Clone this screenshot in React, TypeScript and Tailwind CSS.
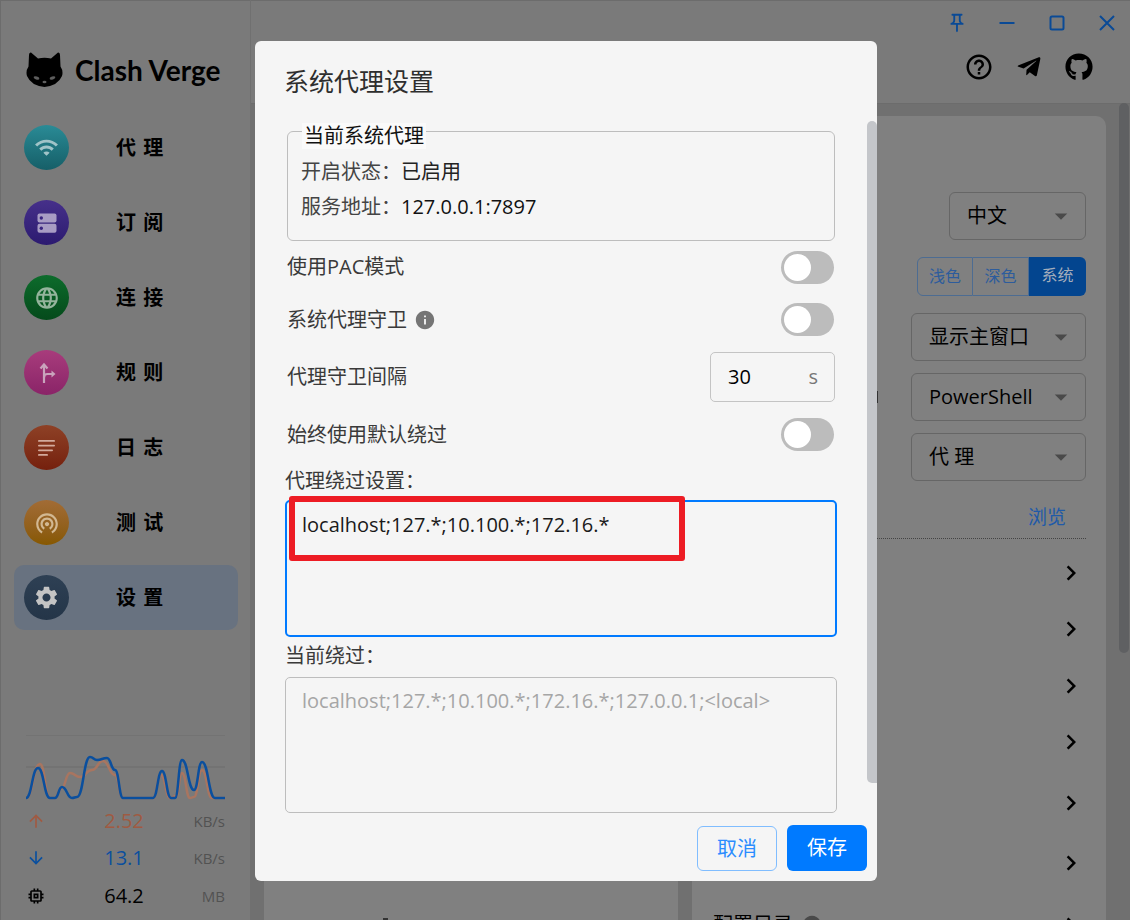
import type { ReactNode } from "react";
import {
  MdArrowDownward,
  MdArrowDropDown,
  MdArrowUpward,
  MdChevronRight,
  MdHelpOutline,
  MdInfo,
  MdLanguage,
  MdMemory,
  MdSettings,
  MdWifi,
  MdWifiTethering,
} from "react-icons/md";
import { FaGithub, FaTelegramPlane } from "react-icons/fa";

type Point = [number, number];

const uploadLine: Point[] = [
  [26, 798], [40, 764], [50, 798], [55, 798], [61, 789], [70, 773], [80, 777], [92, 770],
  [103, 761], [115, 775], [123, 798], [153, 798], [161, 775], [170, 798], [176, 796],
  [182, 773], [190, 798], [194, 797], [202, 770], [212, 798], [225, 798],
];

const downloadLine: Point[] = [
  [26, 798], [38, 768], [50, 798], [55, 798], [62, 787], [72, 798], [77, 797], [90, 757],
  [97, 760], [107, 758], [115, 770], [123, 798], [153, 798], [162, 771], [171, 798],
  [175, 798], [182, 760], [194, 790], [202, 762], [215, 798], [225, 798],
];

const toPath = (points: Point[]) =>
  points.reduce((d, [x, y], i) => {
    if (i === 0) return `M${x} ${y}`;
    const [px, py] = points[i - 1];
    const mid = (px + x) / 2;
    return `${d} C${mid} ${py} ${mid} ${y} ${x} ${y}`;
  }, "");

const CatLogo = () => (
  <svg width="37" height="35" viewBox="0 0 37 35" className="shrink-0">
    <path
      d="M5 .5 L12 6.5 Q18.5 5 25 6.5 L32 .5 Q34 .2 34 3 L34.5 14.5 Q37.5 19 36 24 Q32 33.5 18.5 35 Q5 33.5 1 24 Q-.5 19 2.5 14.5 L3 3 Q3 .2 5 .5 Z"
      fill="#000"
    />
    <ellipse cx="10.5" cy="26" rx="3" ry="1.5" transform="rotate(20 10.5 26)" fill="#5e5e5e" />
    <ellipse cx="26.5" cy="26" rx="3" ry="1.5" transform="rotate(-20 26.5 26)" fill="#5e5e5e" />
    <ellipse cx="18.5" cy="30" rx="2" ry="1.2" fill="#5e5e5e" />
  </svg>
);

const ServerIcon = () => (
  <svg width="20" height="20" viewBox="0 0 20 20">
    <rect x="0.5" y="0.5" width="19" height="9" rx="2" fill="#a89cc4" />
    <rect x="0.5" y="10.8" width="19" height="9" rx="2" fill="#a89cc4" />
    <circle cx="4.3" cy="5" r="1.7" fill="#3a2480" />
    <circle cx="4.3" cy="15.3" r="1.7" fill="#3a2480" />
  </svg>
);

const RuleIcon = () => (
  <svg width="22" height="22" viewBox="0 0 22 22" fill="none" stroke="#c9a4bc" strokeWidth="2.2">
    <path d="M8 21V3" />
    <path d="M4.5 6.5 8 2.5l3.5 4" />
    <path d="M8 15.5c0-3 1.5-3.5 3.5-3.5H16" />
    <path d="M15.5 8.5 19.5 12l-4 3.5z" fill="#c9a4bc" stroke="none" />
  </svg>
);

const LogIcon = () => (
  <svg width="18" height="16" viewBox="0 0 18 16" fill="#d3aa9c">
    <rect x="0" y="0" width="17" height="1.8" rx="0.9" />
    <rect x="0" y="4.7" width="17" height="1.8" rx="0.9" />
    <rect x="0" y="9.4" width="15" height="1.8" rx="0.9" />
    <rect x="0" y="14" width="10" height="1.8" rx="0.9" />
  </svg>
);

const navItems: { label: string; circle: string; icon: ReactNode; active?: boolean }[] = [
  { label: "代 理", circle: "from-[#2a8b96] to-[#165f68]", icon: <MdWifi size={25} color="#a0c4c8" /> },
  { label: "订 阅", circle: "from-[#46308a] to-[#2c1a70]", icon: <ServerIcon /> },
  { label: "连 接", circle: "from-[#0d6c2c] to-[#054a1b]", icon: <MdLanguage size={26} color="#94b49c" /> },
  { label: "规 则", circle: "from-[#a83c7c] to-[#8a2468]", icon: <RuleIcon /> },
  { label: "日 志", circle: "from-[#8e4126] to-[#75200d]", icon: <LogIcon /> },
  { label: "测 试", circle: "from-[#a26c35] to-[#875800]", icon: <MdWifiTethering size={26} color="#d2b892" /> },
  { label: "设 置", circle: "from-[#2e4054] to-[#243548]", icon: <MdSettings size={27} color="#c4c4c4" />, active: true },
];

const Toggle = () => (
  <div className="w-[53px] h-[33px] mr-px rounded-full bg-[#bcbcbc] flex items-center pl-[3px]">
    <div className="w-[27px] h-[27px] rounded-full bg-white" />
  </div>
);

const Select = ({ width, children }: { width: string; children: ReactNode }) => (
  <div className={`${width} h-[48px] border border-[#666] rounded-[6px] flex items-center justify-between pl-[17px] pr-[9px] text-[20px] text-black`}>
    <span>{children}</span>
    <MdArrowDropDown size={30} color="#4a4a4a" />
  </div>
);

const StatRow = ({ icon, value, unit, color }: { icon: ReactNode; value: string; unit: string; color: string }) => (
  <div className="h-[37.5px] flex items-center w-[199px]">
    <div className="w-[20px] flex justify-center">{icon}</div>
    <div className={`w-[60px] ml-[48px] text-center text-[20px] ${color}`}>{value}</div>
    <div className="flex-1 text-right text-[15px] text-[#525252]">{unit}</div>
  </div>
);

const Sidebar = () => (
  <aside className="w-[251px] shrink-0 border-r border-[#707070] flex flex-col">
    <div className="h-[115px] pl-[26px] pt-[52px] flex items-start gap-[12px]">
      <CatLogo />
      <span className="font-['Lato'] font-bold text-[28px] leading-[36px] text-black">Clash Verge</span>
    </div>
    <nav className="flex flex-col gap-[10px] ml-[14px] mr-[12px]">
      {navItems.map((item) => (
        <div
          key={item.label}
          className={`h-[65px] rounded-[10px] pl-[10px] flex items-center gap-[47px] ${item.active ? "bg-[#687280]" : ""}`}
        >
          <div className={`w-[45px] h-[45px] rounded-full bg-linear-to-b ${item.circle} flex items-center justify-center`}>
            {item.icon}
          </div>
          <span className="text-[20px] font-bold text-black [word-spacing:2px]">{item.label}</span>
        </div>
      ))}
    </nav>
    <div className="mt-[105px] pl-[26px]">
      <svg width="199" height="67" viewBox="26 735 199 67" fill="none" className="block">
        <line x1="26" y1="735" x2="225" y2="735" stroke="#6c6c6c" />
        <line x1="26" y1="767" x2="225" y2="767" stroke="#6c6c6c" />
        <path d={toPath(uploadLine)} stroke="#a87560" strokeWidth="2.5" />
        <path d={toPath(downloadLine)} stroke="#0a4f9e" strokeWidth="2.5" />
      </svg>
      <StatRow icon={<MdArrowUpward size={20} color="#a05a42" />} value="2.52" unit="KB/s" color="text-[#a05a42]" />
      <StatRow icon={<MdArrowDownward size={20} color="#0a4f9e" />} value="13.1" unit="KB/s" color="text-[#0a4f9e]" />
      <StatRow icon={<MdMemory size={20} color="#000" />} value="64.2" unit="MB" color="text-black" />
    </div>
  </aside>
);

const WindowControls = () => (
  <div className="flex justify-end gap-[30px] pr-[13px] text-[#0a4a96]">
    <svg width="22" height="22" viewBox="0 0 24 24" fill="currentColor" className="-mx-px -my-px">
      <path d="M14 4v5c0 1.12.37 2.16 1 3H9c.65-.86 1-1.9 1-3V4h4m3-2H7c-.55 0-1 .45-1 1s.45 1 1 1h1v5c0 1.66-1.34 3-3 3v2h5.97v7l1 1 1-1v-7H19v-2c-1.66 0-3-1.34-3-3V4h1c.55 0 1-.45 1-1s-.45-1-1-1z" />
    </svg>
    <svg width="20" height="20" viewBox="0 0 20 20" fill="currentColor">
      <rect x="2.5" y="9" width="15" height="2" />
    </svg>
    <svg width="20" height="20" viewBox="0 0 20 20" fill="none" stroke="currentColor" strokeWidth="2">
      <rect x="3.5" y="3.5" width="13" height="13" rx="1.5" />
    </svg>
    <svg width="20" height="20" viewBox="0 0 20 20" fill="none" stroke="currentColor" strokeWidth="2">
      <path d="M3 3l14 14M17 3L3 17" />
    </svg>
  </div>
);

const SettingsBackdrop = () => (
  <main className="flex-1 flex flex-col min-w-0">
    <header className="h-[103px] pt-[13px] shrink-0">
      <WindowControls />
      <div className="flex justify-end items-center gap-[20px] pr-[36px] mt-[19px] text-black">
        <MdHelpOutline size={30} />
        <FaTelegramPlane size={26} className="mx-[2px]" />
        <FaGithub size={28} className="mx-px" />
      </div>
    </header>
    <div className="flex-1 bg-[#707070] border-t border-[#6c6c6c] flex gap-[14px] pl-[13px] pr-[24px] pt-[12px] min-h-0">
      {/* left column, nearly all of it behind the dialog */}
      <section className="w-[414px] h-[830px] bg-[#808080] rounded-t-[10px] pl-[119px] pt-[802px]">
        <div className="w-[5px] h-[2px] bg-[#333]" />
      </section>
      <section className="w-[414px] h-[830px] bg-[#808080] rounded-t-[10px] flex flex-col items-end pt-[76px] pr-[20px] pl-[21px]">
        <Select width="w-[137px]">中文</Select>
        <div className="mt-[17px] w-[169px] h-[39px] flex text-[16px] leading-[37px] text-center text-[#2d5c9c]">
          <div className="w-[56px] border border-[#4d6c92] rounded-l-[6px]">浅色</div>
          <div className="w-[56px] border-y border-r border-[#4d6c92]">深色</div>
          <div className="flex-1 bg-[#03458f] rounded-r-[6px] text-[#a3adbb]">系统</div>
        </div>
        <div className="mt-[17px]">
          <Select width="w-[175px]">显示主窗口</Select>
        </div>
        <div className="mt-[12px] w-full flex items-center justify-between pl-[164px]">
          <div className="w-px h-[12px] bg-[#333]" />
          <Select width="w-[175px]">PowerShell</Select>
        </div>
        <div className="mt-[12px]">
          <Select width="w-[175px]">代 理</Select>
        </div>
        <div className="mt-[23px] mr-[20px] h-[26px] leading-[26px] text-[19px] text-[#1f5aa8]">浏览</div>
        <div className="mt-[8px] w-full border-b border-dotted border-[#444]" />
        <MdChevronRight size={30} className="mt-[19px] shrink-0" />
        <MdChevronRight size={30} className="mt-[26px] shrink-0" />
        <MdChevronRight size={30} className="mt-[27px] shrink-0" />
        <MdChevronRight size={30} className="mt-[26px] shrink-0" />
        <MdChevronRight size={30} className="mt-[31px] shrink-0" />
        <MdChevronRight size={30} className="mt-[30px] shrink-0" />
        <div className="mt-[32px] w-full flex items-center justify-between text-[20px] text-black">
          <span className="flex items-center gap-[8px]">
            配置目录 <MdInfo size={22} color="#4a4a4a" />
          </span>
          <MdChevronRight size={30} />
        </div>
      </section>
    </div>
    <div className="absolute left-[1119px] top-[103px] w-[10px] h-[550px] rounded-full bg-[#5f6062]" />
  </main>
);

const Label = ({ children }: { children: ReactNode }) => (
  <span className="text-[20px] text-[#3a3a3a]">{children}</span>
);

const ProxyDialog = () => (
  <div className="absolute left-[255px] top-[41px] w-[622px] h-[840px] rounded-[6px] bg-[#f5f5f5] flex flex-col overflow-hidden">
    <h2 className="h-[82px] pl-[29px] flex items-center text-[25px] font-normal text-[#2e2e2e]">系统代理设置</h2>
    <div className="pl-[30px] pr-[40px] flex-1">
      <div className="relative mx-[2px] mt-[8px] h-[110px] border border-[#bdbdbd] rounded-[6px] pl-[13px] pt-[22px] text-[20px] leading-[35px] text-[#444]">
        <span className="absolute left-[14px] -top-[9px] leading-[26px] px-[2px] bg-[#fafafa] text-[#111]">当前系统代理</span>
        <div>开启状态：<span className="text-[#222]">已启用</span></div>
        <div>服务地址：<span className="text-[#111]">127.0.0.1:7897</span></div>
      </div>

      <div className="mx-[2px] mt-[10px] h-[32px] flex items-center justify-between">
        <Label>使用PAC模式</Label>
        <Toggle />
      </div>
      <div className="mx-[2px] mt-[20px] h-[33px] flex items-center justify-between">
        <span className="flex items-center">
          <Label>系统代理守卫</Label>
          <MdInfo size={22} color="#757575" className="ml-[7px]" />
        </span>
        <Toggle />
      </div>
      <div className="mx-[2px] mt-[16px] h-[50px] flex items-center justify-between">
        <Label>代理守卫间隔</Label>
        <div className="w-[125px] h-[50px] border border-[#c4c4c4] rounded-[5px] flex items-center justify-between pl-[17px] pr-[16px] text-[20px] text-black">
          <span>30</span>
          <span className="text-[#777]">s</span>
        </div>
      </div>
      <div className="mx-[2px] mt-[16px] h-[33px] flex items-center justify-between">
        <Label>始终使用默认绕过</Label>
        <Toggle />
      </div>

      <div className="mt-[17px] h-[26px] leading-[26px]">
        <Label>代理绕过设置：</Label>
      </div>
      <textarea
        readOnly
        value="localhost;127.*;10.100.*;172.16.*"
        className="block mt-[6px] w-full h-[137px] border-2 border-[#007aff] rounded-[5px] px-[15px] py-[10px] text-[20px] leading-[26px] text-[#1a1a1a] bg-transparent resize-none outline-none"
      />
      <div className="mt-[6px] h-[26px] leading-[26px]">
        <Label>当前绕过：</Label>
      </div>
      <textarea
        readOnly
        value="localhost;127.*;10.100.*;172.16.*;127.0.0.1;<local>"
        className="block mt-[8px] w-full h-[136px] border border-[#bdbdbd] rounded-[5px] px-[16px] py-[10px] text-[20px] leading-[26px] text-[#a6a6a6] bg-transparent resize-none outline-none"
      />
    </div>
    <div className="flex justify-end items-end gap-[10px] pr-[10px] pb-[10px] text-[20px]">
      <button className="w-[80px] h-[45px] border border-[#80bdff] rounded-[6px] text-[#2a8cff]">取消</button>
      <button className="w-[80px] h-[46px] rounded-[6px] bg-[#007aff] text-white">保存</button>
    </div>
    <div className="absolute right-0 top-[80px] w-[10px] h-[662px] rounded-l-full rounded-t-full bg-[#c4c6ca]" />
    {/* annotation drawn over the screenshot */}
    <div className="absolute left-[34px] top-[455px] w-[396px] h-[65px] border-[6px] border-[#ed1c24] rounded-[3px]" />
  </div>
);

export default function App() {
  return (
    <div className="relative w-[1130px] h-[920px] overflow-hidden flex bg-[#7a7a7a] shadow-[inset_1px_1px_0_#6c6c6c] font-['Open_Sans','Noto_Sans_CJK_SC',sans-serif]">
      <Sidebar />
      <SettingsBackdrop />
      <ProxyDialog />
    </div>
  );
}
